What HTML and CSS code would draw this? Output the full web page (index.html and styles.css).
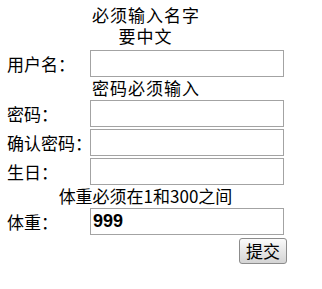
FILE: index.html
```html
<!DOCTYPE html>
<html lang="zh-CN">
<head>
<meta charset="utf-8">
<title>表单</title>
<link rel="stylesheet" href="styles.css">
</head>
<body>
<form class="form">
  <div class="msg msg-first msg-wide">必须输入名字<br>要中文</div>
  <div class="row"><label class="label">用户名：</label><input class="field" type="text"></div>
  <div class="msg msg-wide">密码必须输入</div>
  <div class="row"><label class="label">密码：</label><input class="field" type="password"></div>
  <div class="row"><label class="label">确认密码：</label><input class="field" type="password"></div>
  <div class="row"><label class="label">生日：</label><input class="field" type="text"></div>
  <div class="msg">体重必须在1和300之间</div>
  <div class="row"><label class="label">体重：</label><input class="field field-bold" type="text" value="999"></div>
  <div class="actions"><button class="btn" type="button">提交</button></div>
</form>
</body>
</html>
```

FILE: styles.css
```css
html, body {
  margin: 0;
  padding: 0;
  background: #ffffff;
}
body {
  font-family: "Noto Sans CJK SC", "Liberation Sans", sans-serif;
  font-size: 17px;
  color: #000000;
}
.form {
  display: flex;
  flex-direction: column;
  width: 277px;
  padding: 4px 0 0 7px;
  margin: 0;
}
.msg {
  text-align: center;
  line-height: 21px;
  height: 21px;
  white-space: nowrap;
}
.msg-wide {
  letter-spacing: 1px;
  text-indent: 1px;
}
.msg-first {
  height: 42px;
  margin-bottom: 2px;
}
.row {
  display: flex;
  align-items: center;
  height: 27px;
  margin-top: 2px;
}
.row + .msg {
  margin-top: 0;
}
.label {
  width: 83px;
  flex-shrink: 0;
  white-space: nowrap;
  line-height: 21px;
}
.field {
  box-sizing: border-box;
  width: 194px;
  height: 27px;
  flex-shrink: 0;
  margin: 0;
  padding: 0 2px;
  border: 1px solid #a3a3a3;
  background: #ffffff;
  font-family: "Noto Sans CJK SC", "Liberation Sans", sans-serif;
  font-size: 17px;
  color: #000000;
  outline: none;
}
.field-bold {
  font-family: "Liberation Sans", "DejaVu Sans", sans-serif;
  font-weight: bold;
  font-size: 18px;
}
.actions {
  display: flex;
  justify-content: flex-end;
  margin-top: 3px;
  margin-right: -3px;
}
.btn {
  box-sizing: border-box;
  width: 48px;
  height: 26px;
  margin: 0;
  padding: 0;
  border: 1px solid #8c8c8c;
  border-radius: 3px;
  background: linear-gradient(#fbfbfb, #e3e3e3 60%, #d4d4d4);
  font-family: "Noto Sans CJK SC", "Liberation Sans", sans-serif;
  font-size: 17px;
  line-height: 22px;
  color: #000000;
}
```
